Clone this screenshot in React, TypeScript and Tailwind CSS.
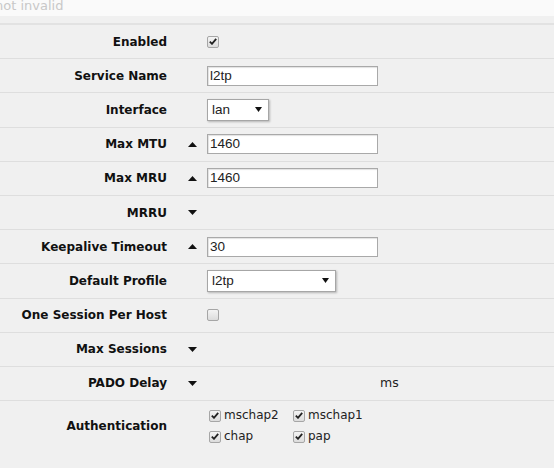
const label = 'text-right text-[12px] font-bold text-[#111] pr-[13px]';
const inputFont = { fontFamily: '"Liberation Sans", Arial, sans-serif' };

function Up() {
  return (
    <svg width="9" height="5" viewBox="0 0 9 5" className="block">
      <path d="M0 5 L4.5 0 L9 5 Z" fill="#111" />
    </svg>
  );
}

function Down() {
  return (
    <svg width="9" height="5" viewBox="0 0 9 5" className="block">
      <path d="M0 0 L9 0 L4.5 5 Z" fill="#111" />
    </svg>
  );
}

function Check({ on }: { on?: boolean }) {
  return (
    <span className="flex h-[12px] w-[12px] shrink-0 items-center justify-center rounded-[2px] border border-[#a6a6a6] bg-gradient-to-b from-[#f4f4f4] to-[#dcdcdc]">
      {on && (
        <svg width="8" height="7" viewBox="0 0 8 7">
          <path d="M0.8 3.6 L3 5.8 L7.2 0.8" stroke="#222" strokeWidth="1.8" fill="none" />
        </svg>
      )}
    </span>
  );
}

function TextBox({ value, w = 'w-[171px]' }: { value: string; w?: string }) {
  return (
    <div
      className={`${w} flex h-[20px] items-center border border-[#a9a9a9] bg-white px-[2px] text-[13.5px] text-[#222] shadow-[inset_1px_1px_1px_rgba(0,0,0,0.12)]`}
      style={inputFont}
    >
      {value}
    </div>
  );
}

function Select({ value, w }: { value: string; w: string }) {
  return (
    <div
      className={`${w} flex h-[22px] items-center justify-between border border-[#a6a6a6] bg-white pl-[4px] pr-[6px] text-[13.5px] text-[#222] shadow-[1px_1px_2px_rgba(0,0,0,0.25)]`}
      style={inputFont}
    >
      <span>{value}</span>
      <svg width="7" height="5" viewBox="0 0 7 5">
        <path d="M0 0 L7 0 L3.5 5 Z" fill="#111" />
      </svg>
    </div>
  );
}

type Row = { name: string; arrow?: 'up' | 'down'; field?: React.ReactNode };

const rows: Row[] = [
  { name: 'Enabled', field: <Check on /> },
  { name: 'Service Name', field: <TextBox value="l2tp" /> },
  { name: 'Interface', field: <Select value="lan" w="w-[62px]" /> },
  { name: 'Max MTU', arrow: 'up', field: <TextBox value="1460" /> },
  { name: 'Max MRU', arrow: 'up', field: <TextBox value="1460" /> },
  { name: 'MRRU', arrow: 'down' },
  { name: 'Keepalive Timeout', arrow: 'up', field: <TextBox value="30" /> },
  { name: 'Default Profile', field: <Select value="l2tp" w="w-[129px]" /> },
  { name: 'One Session Per Host', field: <Check /> },
  { name: 'Max Sessions', arrow: 'down' },
  {
    name: 'PADO Delay',
    arrow: 'down',
    field: <span className="pl-[173px] text-[12.5px] text-[#222]">ms</span>,
  },
];

export default function App() {
  return (
    <div
      className="h-[468px] w-[554px] overflow-hidden bg-[#f0f0f0]"
      style={{ fontFamily: '"DejaVu Sans", Verdana, sans-serif' }}
    >
      {/* status strip */}
      <div className="h-[16px] overflow-hidden bg-[#fafafa] text-[13px] leading-[12px] text-[#c8c8c8]">
        <span className="-ml-[5px]">not invalid</span>
      </div>
      <div className="h-[7px]" />
      <div className="border-t-2 border-[#e2e2e2]">
        {rows.map((r) => (
          <div
            key={r.name}
            className="grid h-[34.2px] grid-cols-[180px_27px_1fr] items-center border-b border-[#dedede]"
          >
            <div className={label}>{r.name}</div>
            <div className="flex justify-start pl-[8px]">
              {r.arrow === 'up' && <Up />}
              {r.arrow === 'down' && <Down />}
            </div>
            <div className="flex items-center">{r.field}</div>
          </div>
        ))}
        <div className="grid h-[50px] grid-cols-[180px_27px_1fr] items-center">
          <div className={label}>Authentication</div>
          <div />
          <div className="grid grid-cols-[84px_84px] gap-y-[6px] pl-[2px] text-[12px] text-[#222]">
            {['mschap2', 'mschap1', 'chap', 'pap'].map((a) => (
              <label key={a} className="flex items-center gap-[3px] leading-[15px]">
                <Check on />
                {a}
              </label>
            ))}
          </div>
        </div>
      </div>
    </div>
  );
}
